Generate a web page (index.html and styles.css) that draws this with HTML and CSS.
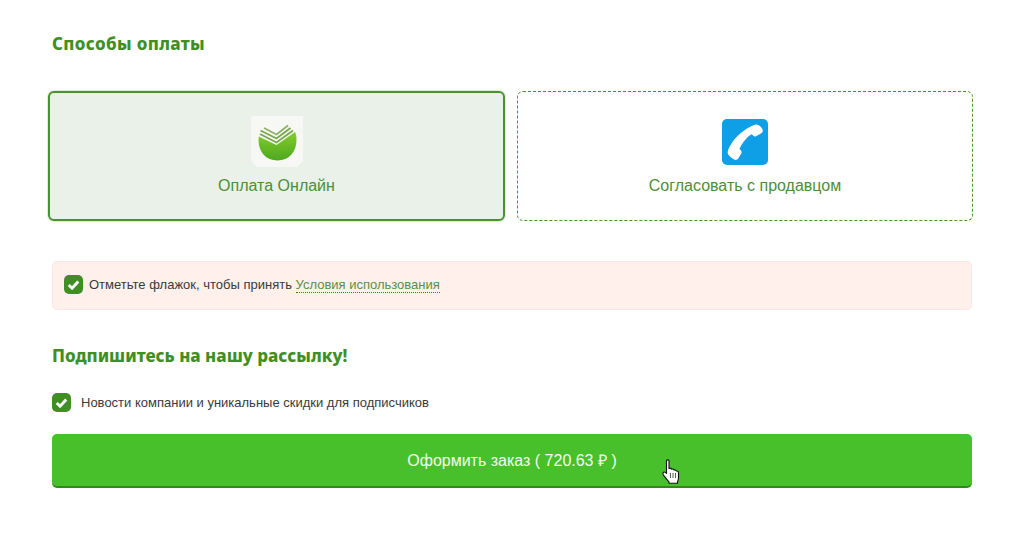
FILE: index.html
```html
<!DOCTYPE html>
<html lang="ru">
<head>
<meta charset="utf-8">
<title>Способы оплаты</title>
<link rel="stylesheet" href="styles.css">
</head>
<body>
<main class="page">
  <h2 class="title title-pay">Способы оплаты</h2>
  <div class="methods">
    <div class="method method-active">
      <svg class="method-icon" viewBox="0 0 52 52" width="52" height="52" aria-hidden="true">
        <defs>
          <linearGradient id="sb" x1="0" y1="0" x2="0" y2="1">
            <stop offset="0" stop-color="#86cc2e"/>
            <stop offset="1" stop-color="#4ea81f"/>
          </linearGradient>
        </defs>
        <path d="M0 0H52V45L46 51H6L0 45Z" fill="#f7f8f5"/>
        <path d="M7.500 24C7.500 36 15 44.500 26.500 44.500C38 44.500 45.500 36 45.500 24C45.500 20 45 18 44 16L25.500 29L7.800 20.500Z" fill="url(#sb)"/>
        <path d="M9 18L25.500 26.500L42 14.500" fill="none" stroke="#79a84a" stroke-width="1.900"/>
        <path d="M9.500 14.500L25.500 22.500L39.500 12" fill="none" stroke="#79a84a" stroke-width="1.900"/>
        <path d="M13 12L25.500 18.500L37 9.500" fill="none" stroke="#8db168" stroke-width="1.800"/>
      </svg>
      <span class="method-name">Оплата Онлайн</span>
    </div>
    <div class="method method-dashed">
      <svg class="method-icon" viewBox="0 0 46 46" width="46" height="46" aria-hidden="true">
        <rect width="46" height="46" rx="5" fill="#0f9fe6"/>
        <path d="M32 6C33.500 5 35.500 5.300 37.500 6.800C39.800 8.500 41 10.500 40.800 12.300C40.600 13.500 39.500 14.300 38.500 14.800L34 17.300C33 17.800 32 17.500 31.300 16.800L29.800 15.300C28 16 26 17.800 23.500 20.500C20.500 24 18.300 27.500 17.500 30L19 31.500C19.700 32.500 19.800 33.500 19.300 34.500L16.300 39.500C15.500 40.700 14 41.200 12.800 40.800C10 39.500 6.500 36.500 5.800 34.500C5.300 32.500 6.800 28.500 9.800 24C14.300 17 23 9.500 32 6Z" fill="#fff"/>
      </svg>
      <span class="method-name">Согласовать с продавцом</span>
    </div>
  </div>
  <div class="terms">
    <span class="check"><svg viewBox="0 0 20 20" width="19" height="19" aria-hidden="true"><path d="M5 10.500L8.500 14L15 6.800" fill="none" stroke="#fff" stroke-width="3"/></svg></span>
    <span class="terms-text">Отметьте флажок, чтобы принять <a class="terms-link" href="#">Условия использования</a></span>
  </div>
  <h2 class="title title-news">Подпишитесь на нашу рассылку!</h2>
  <div class="news">
    <span class="check"><svg viewBox="0 0 20 20" width="19" height="19" aria-hidden="true"><path d="M5 10.500L8.500 14L15 6.800" fill="none" stroke="#fff" stroke-width="3"/></svg></span>
    <span class="news-text">Новости компании и уникальные скидки для подписчиков</span>
  </div>
  <button class="submit" type="button">Оформить заказ ( 720.63 ₽ )
    <svg class="cursor" viewBox="0 0 18 25" width="18" height="25" aria-hidden="true">
      <path d="M4.500 1.500C5 .6 6.500 .6 7 1.500V9.500C8 9 9 9.200 9.500 10.200C10.500 9.700 11.500 10 12 11C13 10.600 14 11 14.500 12C15.700 11.800 16.500 12.600 16.500 14V18.500C16.500 20.500 16 21.500 15.500 23V24.300H7V22.800C5 20.800 3.300 18.300 1.300 15.800C.5 14.600 1 13.300 2 13.100C3 12.900 3.800 13.600 4.500 14.500Z" fill="#fff" stroke="#111" stroke-width="1.100" stroke-linejoin="round"/>
      <path d="M8.500 14V19M11 14V19M13.500 14V19" stroke="#333" stroke-width=".8" fill="none"/>
    </svg>
  </button>
</main>
</body>
</html>
```

FILE: styles.css
```css
* { box-sizing: border-box; }
html, body { margin: 0; padding: 0; background: #fff; }
body { font-family: "Liberation Sans", Arial, sans-serif; color: #3a3a3a; }
.page { width: 920px; margin-left: 52px; padding-top: 33px; }
.title {
  margin: 0;
  font-family: "Noto Sans", "Open Sans", sans-serif;
  font-size: 17px;
  line-height: 22px;
  font-weight: 800;
  color: #3f8f25;
}
.title-pay { letter-spacing: .35px; }
.title-news { margin-top: 35px; }
.methods {
  display: grid;
  grid-template-columns: 457px 456px;
  gap: 12px;
  margin: 36px 0 0 -4px;
}
.method {
  height: 130px;
  display: flex;
  flex-direction: column;
  align-items: center;
  border-radius: 6px;
  font-size: 16px;
  color: #4c8f38;
}
.method-active {
  background: #e9f1e8;
  border: 2px solid #4a9231;
  box-shadow: 0 0 0 1px #dcefd6;
  padding-top: 23px;
}
.method-dashed {
  border: 1px dashed #4a9231;
  padding-top: 27px;
}
.method-icon { display: block; flex: none; }
.method-name { display: block; line-height: 18px; margin-top: 9px; }
.method-dashed .method-name { margin-top: 12px; }
.terms {
  display: flex;
  align-items: center;
  gap: 6px;
  height: 49px;
  margin-top: 40px;
  padding-left: 11px;
  background: #fff0ec;
  border: 1px solid #fbe6e1;
  border-radius: 5px;
  font-size: 13px;
  padding-bottom: 2px;
}
.check {
  flex: none;
  width: 19px;
  height: 19px;
  border-radius: 5px;
  background: #3f8f25;
  display: block;
}
.check svg { display: block; }
.terms-text { line-height: 16px; }
.terms-link {
  color: #5a8f44;
  text-decoration: none;
  border-bottom: 1px dotted #3f7a2a;
}
.news {
  display: flex;
  align-items: center;
  gap: 10px;
  margin-top: 26px;
  font-size: 13px;
}
.submit {
  position: relative;
  display: block;
  width: 100%;
  height: 54px;
  margin: 22px 0 0;
  padding: 0;
  border: 0;
  border-bottom: 2px solid #2f8a1c;
  border-radius: 5px;
  background: #48c02c;
  color: #f2fbee;
  font-family: inherit;
  font-size: 16px;
}
.cursor { position: absolute; left: 610px; top: 25px; }
```
